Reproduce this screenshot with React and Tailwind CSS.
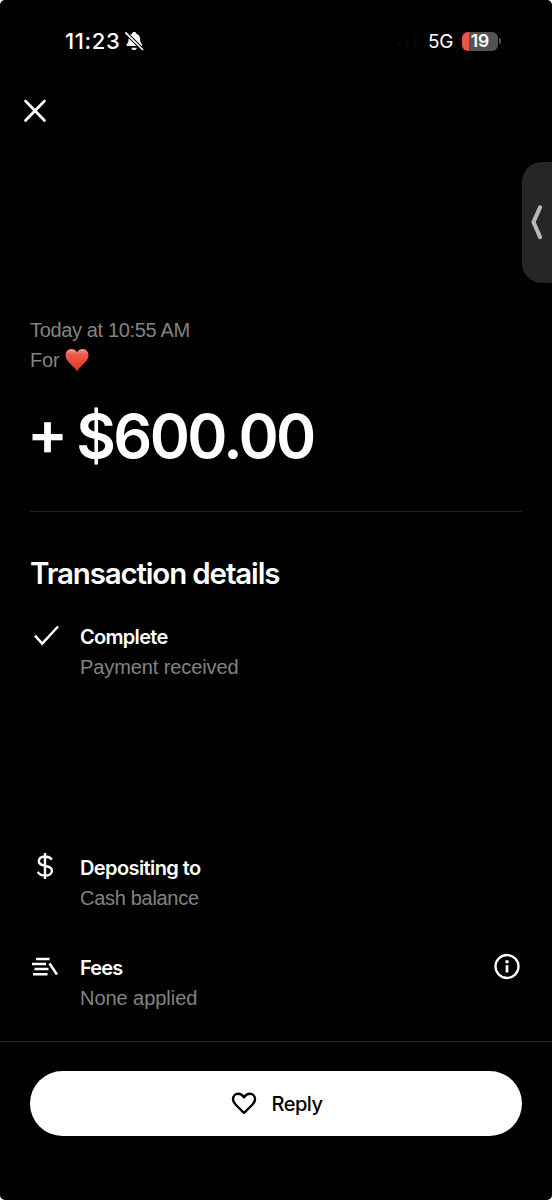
function SilentBell() {
  return (
    <svg className="ml-[4px] h-5 w-5" viewBox="0 0 20 20" fill="none">
      <path d="M10.200 1c1.200 0 2 .7 2.100 1.700 2.600.8 3.700 2.800 3.800 5.500.1 2.500.6 3.600 1.700 4.700.9.9.6 2-.6 2H3.500c-1.200 0-1.500-1.100-.6-2 1.100-1.100 1.600-2.200 1.700-4.700.1-2.700 1.200-4.700 3.500-5.500.1-1 .9-1.700 2.100-1.700Z" fill="white" />
      <path d="M7.400 16.800h5.400c-.2 1.400-1.300 2.300-2.700 2.300s-2.500-.9-2.700-2.300Z" fill="white" />
      <path d="M1.500 1.500 18.500 18.500" stroke="black" strokeWidth="3.800" />
      <path d="M1.800 1.800 18.500 18.500" stroke="white" strokeWidth="1.700" strokeLinecap="round" />
    </svg>
  );
}

function RedHeart() {
  return (
    <svg className="ml-[6px] h-6 w-6" viewBox="0 0 24 24" role="img" aria-label="Red heart">
      <defs>
        <linearGradient id="heart" x1="0" y1="0" x2="0" y2="1">
          <stop offset="0" stopColor="#f69a8b" />
          <stop offset=".25" stopColor="#ee5948" />
          <stop offset="1" stopColor="#dc3528" />
        </linearGradient>
      </defs>
      <path d="M12 4.300C10.700 2 8.800 1 6.500 1 3 1 .5 3.700.5 7.400c0 6.300 8.400 10 11.500 16 3.100-6 11.500-9.700 11.500-16C23.500 3.700 21 1 17.500 1 15.200 1 13.300 2 12 4.300Z" fill="url(#heart)" />
    </svg>
  );
}

function Detail({ icon, title, subtitle, titleClass, subtitleClass, action }) {
  return (
    <div className="flex h-[60px] items-start">
      <div className="h-7 w-[50px] shrink-0">{icon}</div>
      <div className="flex-1 text-[20px] leading-[30px] whitespace-nowrap">
        <div className={`font-semibold ${titleClass}`}>{title}</div>
        <div className={`font-['Liberation_Sans',sans-serif] text-[#838383] ${subtitleClass}`}>{subtitle}</div>
      </div>
      {action}
    </div>
  );
}

export default function App() {
  return (
    <div className="bg-white">
      <main className="relative flex h-[1200px] w-[552px] flex-col overflow-hidden rounded-[5px] bg-black font-['Inter',sans-serif] text-white">
        <div className="flex h-[82px] shrink-0 items-center pr-[51px] pl-[65px]">
          <span className="text-[22px] font-medium tracking-[0.6px]">11:23</span>
          <SilentBell />
          <div className="ml-auto flex items-center">
            <div className="mr-[11px] flex h-3 items-end gap-[4px]">
              <i className="h-1 w-[4px] rounded-sm bg-[#080808]" />
              <i className="h-2 w-[4px] rounded-sm bg-[#050505]" />
              <i className="h-3 w-[4px] rounded-sm bg-[#050505]" />
            </div>
            <span className="pt-[2px] text-[19px] tracking-[-0.4px]">5G</span>
            <div className="ml-[9px] flex h-[19px] w-[36px] items-center justify-center rounded-[6px] bg-[linear-gradient(90deg,#ed5149_7px,#535353_7px)] text-[17.500px] font-semibold">19</div>
            <i className="ml-px h-[6px] w-[2px] rounded-r-full bg-[#535353]" />
          </div>
        </div>

        <button className="mt-[16px] ml-[22px] h-[26px] w-[26px] shrink-0" aria-label="Close">
          <svg viewBox="0 0 26 26"><path d="m3.500 3 19 19.500M22.500 3l-19 19.500" stroke="white" strokeWidth="2.700" strokeLinecap="round" /></svg>
        </button>

        <button className="absolute top-[162px] right-0 h-[121px] w-[30px] rounded-l-[20px] bg-[#262626]" aria-label="Open side panel">
          <svg className="h-[121px] w-[30px]" viewBox="0 0 30 121" fill="none"><path d="m18 45.500-6.500 14.500L18 75" stroke="#b8b7bc" strokeWidth="4.200" strokeLinecap="round" strokeLinejoin="round" /></svg>
        </button>

        <section className="mt-[191px] h-[197px] shrink-0 px-[30px]">
          <div className="h-full border-b border-[#202020] text-[20px] leading-[30px] text-[#838383]">
            <div className="font-['Liberation_Sans',sans-serif] tracking-[-0.35px]">Today at 10:55 AM</div>
            <div className="flex items-center font-['Liberation_Sans',sans-serif]"><span className="tracking-[-0.2px]">For</span><RedHeart /></div>
            <div className="mt-[25px] -ml-[3px] text-[61px] leading-[72px] font-semibold tracking-[-2.6px] whitespace-nowrap text-white [word-spacing:-2px]"><span className="relative -top-[3px]">+</span> $600.00</div>
          </div>
        </section>

        <section className="flex h-[529px] shrink-0 flex-col px-[30px] pt-[43px]">
          <h1 className="text-[29.500px] leading-[36px] font-semibold tracking-[-1.150px]">Transaction details</h1>
          <div className="mt-[31px]">
            <Detail
              title="Complete" subtitle="Payment received" titleClass="tracking-[-0.7px]" subtitleClass="tracking-[-0.1px]"
              icon={<svg className="h-7 w-8" viewBox="0 0 32 28" fill="none"><path d="m5 13.600 7.200 8L28 4.500" stroke="white" strokeWidth="2.500" /></svg>}
            />
          </div>
          <div className="mt-[171px] flex flex-col gap-[40px]">
            <Detail
              title="Depositing to" subtitle="Cash balance" titleClass="tracking-[-0.6px]" subtitleClass="tracking-[-0.3px]"
              icon={<svg className="h-7 w-8" viewBox="0 0 32 28" fill="none"><path d="M15 0v26M22 6.500C20.300 4.500 17.900 3.500 15 3.500c-3.800 0-6.200 1.900-6.200 4.700 0 6.500 13.100 3 13.100 9.500 0 3-2.700 4.900-6.600 4.900-3.300 0-6-1.300-7.600-3.700" stroke="white" strokeWidth="2.400" /></svg>}
            />
            <Detail
              title="Fees" subtitle="None applied" titleClass="tracking-[-0.8px]" subtitleClass="tracking-[-0.05px]"
              icon={<svg className="h-7 w-8" viewBox="0 0 32 28" fill="none"><path d="M6 6h13.500M2 11h14M4.500 16h14M3 21.300h14.500M19.500 10.500l7.500 11" stroke="white" strokeWidth="2.500" /></svg>}
              action={<button className="h-7 w-7" aria-label="About fees"><svg viewBox="0 0 28 28" fill="none"><circle cx="13" cy="13.500" r="11.500" stroke="white" strokeWidth="2.300" /><path d="M13 12.200v7.300" stroke="white" strokeWidth="2.700" /><circle cx="13" cy="8.700" r="1.800" fill="white" /></svg></button>}
            />
          </div>
        </section>

        <footer className="h-[159px] shrink-0 border-t border-[#202020] px-[30px] pt-[29px]">
          <button className="flex h-[65px] w-full items-center justify-center rounded-full bg-white pl-[2px] text-[20px] font-medium tracking-[-0.5px] text-black">
            <svg className="mt-px mr-[15px] -ml-px h-[26px] w-[26px]" viewBox="0 0 26 26" fill="none"><path d="M13 6.300C11.500 4 9.500 2.700 7.200 2.700c-3.100 0-5.200 2.400-5.200 5.600 0 2.200.9 3.600 2.500 5.200L13 22l8.500-8.500C23.100 11.900 24 10.500 24 8.300c0-3.200-2.100-5.600-5.200-5.600-2.300 0-4.300 1.300-5.800 3.600Z" stroke="black" strokeWidth="2.400" strokeLinejoin="round" /></svg>
            <span className="pt-px">Reply</span>
          </button>
        </footer>
      </main>
    </div>
  );
}
